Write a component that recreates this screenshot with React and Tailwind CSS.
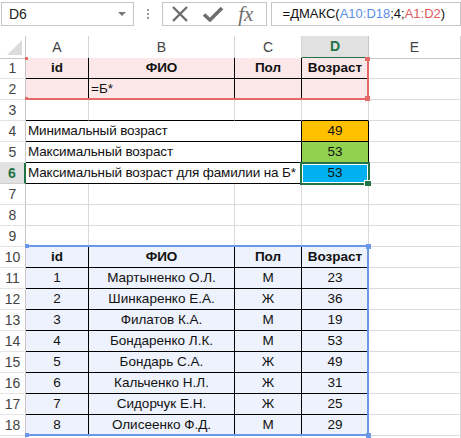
const people = [
    [1, "Мартыненко О.Л.", "М", 23],
    [2, "Шинкаренко Е.А.", "Ж", 36],
    [3, "Филатов К.А.", "М", 19],
    [4, "Бондаренко Л.К.", "М", 53],
    [5, "Бондарь С.А.", "Ж", 49],
    [6, "Кальченко Н.Л.", "Ж", 31],
    [7, "Сидорчук Е.Н.", "Ж", 25],
    [8, "Олисеенко Ф.Д.", "М", 29],
]

function Cell({ children, span, right = "gray", bottom = "gray", bg = "", align = "center", bold }) {
    const r = right === "black" ? "border-r-black" : "border-r-[#dadada]"
    const b = bottom === "black" ? "border-b-black" : "border-b-[#dadada]"
    return (
        <div
            className={`flex items-center h-[21px] border-r border-b ${r} ${b} ${bg} ${span ? "col-span-3 tracking-[-0.15px]" : ""} ${align === "left" ? "justify-start pl-[2px]" : "justify-center"} ${bold ? "font-bold" : ""} whitespace-nowrap overflow-visible text-[13.5px] text-[#111]`}
        >
            {children}
        </div>
    )
}

function RowHead({ n, active }) {
    if (active) return (
        <div className="flex items-center justify-center h-[21px] bg-[#e1e1e1] border-r-2 border-r-[#217346] border-b border-b-[#d0d0d0] text-[14px] font-bold text-[#217346]">
            {n}
        </div>
    )
    return (
        <div className="flex items-center justify-center h-[21px] bg-white border-r border-r-[#c6c6c6] border-b border-b-[#e4e4e4] text-[14px] text-[#444]">
            {n}
        </div>
    )
}

function Toolbar() {
    return (
        <div className="flex items-start h-[36px] pt-[2px] bg-white">
            <div className="ml-[1px] w-[139px] h-[24px] border border-[#c6c6c6] flex items-center justify-between pl-[7px] pr-[7px] text-[14px] text-[#222]">
                <span>D6</span>
                <span className="w-0 h-0 border-l-[4px] border-r-[4px] border-t-[4px] border-l-transparent border-r-transparent border-t-[#777]" />
            </div>
            <div className="w-[30px] h-[24px] flex flex-col items-center justify-center gap-[2px]">
                <span className="w-[2px] h-[2px] bg-[#999]" />
                <span className="w-[2px] h-[2px] bg-[#999]" />
                <span className="w-[2px] h-[2px] bg-[#999]" />
            </div>
            <div className="w-[110px] h-[24px] border border-[#c6c6c6] flex items-center">
                <svg width="20" height="18" viewBox="0 0 20 18" className="ml-[7px]">
                    <path d="M3 2 L17 16 M17 2 L3 16" stroke="#6e6e6e" strokeWidth="2.4" fill="none" />
                </svg>
                <svg width="22" height="18" viewBox="0 0 22 18" className="ml-[12px]">
                    <path d="M2 9.5 L8 15 L20 3" stroke="#6e6e6e" strokeWidth="3.6" fill="none" strokeLinejoin="round" />
                </svg>
                <span className="ml-[14px] text-[21px] italic text-[#6e6e6e] leading-none" style={{ fontFamily: '"Liberation Serif", "DejaVu Serif", serif' }}>
                    fx
                </span>
            </div>
            <div className="ml-[4px] w-[200px] h-[24px] border border-[#c6c6c6] flex items-center pl-[11px] text-[13px] text-[#111] whitespace-nowrap">
                <span>=ДМАКС(</span>
                <span className="text-[#5b8ee6]">A10:D18</span>
                <span>;4;</span>
                <span className="text-[#e05a5a]">A1:D2</span>
                <span>)</span>
            </div>
        </div>
    )
}

function ColHeaders() {
    return (
        <div className="grid grid-cols-[26px_63px_146px_67px_67px_92px] h-[22px]">
            <div className="relative border-r border-r-[#c6c6c6] border-b border-b-[#c6c6c6]">
                <svg width="16" height="15" viewBox="0 0 16 15" className="absolute left-[7px] top-[4px]">
                    <path d="M15 0 L15 15 L0 15 Z" fill="#dcdcdc" />
                </svg>
            </div>
            {["A", "B", "C", "D", "E"].map(c => c === "D" ? (
                <div key={c} className="flex items-center justify-center bg-[#e1e1e1] border-r border-r-[#c6c6c6] border-b-2 border-b-[#217346] text-[14px] font-bold text-[#217346]">
                    {c}
                </div>
            ) : (
                <div key={c} className="flex items-center justify-center border-r border-r-[#d4d4d4] border-b border-b-[#c6c6c6] text-[14px] text-[#444]">
                    {c}
                </div>
            ))}
        </div>
    )
}

export default function App() {
    const pink = "bg-[#fce8e8]"
    const blue = "bg-[#edf2fc]"

    const rows = []

    // row 1
    rows.push(
        <RowHead key="h1" n={1} />,
        <Cell key="a1" bg={pink} right="black" bottom="black" bold>id</Cell>,
        <Cell key="b1" bg={pink} right="black" bottom="black" bold>ФИО</Cell>,
        <Cell key="c1" bg={pink} right="black" bottom="black" bold>Пол</Cell>,
        <Cell key="d1" bg={pink} right="black" bottom="black" bold>Возраст</Cell>,
        <Cell key="e1" />
    )
    // row 2
    rows.push(
        <RowHead key="h2" n={2} />,
        <Cell key="a2" bg={pink} right="black" />,
        <Cell key="b2" bg={pink} right="black" align="left">=Б*</Cell>,
        <Cell key="c2" bg={pink} right="black" />,
        <Cell key="d2" bg={pink} right="black" />,
        <Cell key="e2" />
    )
    // row 3
    rows.push(
        <RowHead key="h3" n={3} />,
        <Cell key="a3" bottom="black" />,
        <Cell key="b3" bottom="black" />,
        <Cell key="c3" bottom="black" />,
        <Cell key="d3" bottom="black" />,
        <Cell key="e3" />
    )
    const stats = [
        [4, "Минимальный возраст", "49", "bg-[#ffc000]"],
        [5, "Максимальный возраст", "53", "bg-[#92d050]"],
        [6, "Максимальный возраст для фамилии на Б*", "53", "bg-[#00b0f0]"],
    ]
    stats.forEach(([n, label, val, color]) => {
        rows.push(
            <RowHead key={"h" + n} n={n} active={n === 6} />,
            <Cell key={"a" + n} span right="black" bottom="black" align="left">{label}</Cell>,
            <Cell key={"d" + n} bg={color} right="black" bottom="black">{val}</Cell>,
            <Cell key={"e" + n} />
        )
    })
    ;[7, 8, 9].forEach(n => {
        rows.push(
            <RowHead key={"h" + n} n={n} />,
            <Cell key={"a" + n} />,
            <Cell key={"b" + n} />,
            <Cell key={"c" + n} />,
            <Cell key={"d" + n} />,
            <Cell key={"e" + n} />
        )
    })
    // row 10 header
    rows.push(
        <RowHead key="h10" n={10} />,
        <Cell key="a10" bg={blue} right="black" bottom="black" bold>id</Cell>,
        <Cell key="b10" bg={blue} right="black" bottom="black" bold>ФИО</Cell>,
        <Cell key="c10" bg={blue} right="black" bottom="black" bold>Пол</Cell>,
        <Cell key="d10" bg={blue} right="black" bottom="black" bold>Возраст</Cell>,
        <Cell key="e10" />
    )
    people.forEach(([id, name, sex, age], i) => {
        const n = 11 + i
        rows.push(
            <RowHead key={"h" + n} n={n} />,
            <Cell key={"a" + n} bg={blue} right="black" bottom="black">{id}</Cell>,
            <Cell key={"b" + n} bg={blue} right="black" bottom="black">{name}</Cell>,
            <Cell key={"c" + n} bg={blue} right="black" bottom="black">{sex}</Cell>,
            <Cell key={"d" + n} bg={blue} right="black" bottom="black">{age}</Cell>,
            <Cell key={"e" + n} />
        )
    })
    // row 19 peeks in under the window edge, gridlines only
    rows.push(
        <div key="h19" className="h-[21px] border-r border-r-[#c6c6c6]" />,
        <Cell key="a19" />,
        <Cell key="b19" />,
        <Cell key="c19" />,
        <Cell key="d19" />,
        <Cell key="e19" />
    )

    return (
        <div className="relative w-[461px] h-[438px] overflow-hidden bg-white" style={{ fontFamily: '"Liberation Sans", Arial, sans-serif' }}>
            <Toolbar />
            <ColHeaders />
            <div className="grid grid-cols-[26px_63px_146px_67px_67px_92px]">
                {rows}
            </div>

            {/* red reference range A1:D2 */}
            <div className="absolute left-[25px] top-[57px] w-[344px] h-[43px] border-r-2 border-b-2 border-[#e46a6a] pointer-events-none" />
            <div className="absolute left-[365px] top-[57px] w-[5px] h-[4px] bg-[#e46a6a]" />
            <div className="absolute left-[365px] top-[96px] w-[5px] h-[5px] bg-[#e46a6a]" />
            <div className="absolute left-[25px] top-[57px] w-[3px] h-[3px] bg-[#e46a6a]" />
            <div className="absolute left-[25px] top-[97px] w-[3px] h-[3px] bg-[#e46a6a]" />

            {/* blue reference range A10:D18 */}
            <div className="absolute left-[25px] top-[245px] w-[344px] h-[191px] border-t-2 border-r-2 border-b-2 border-[#6c97e8] pointer-events-none" />
            <div className="absolute left-[25px] top-[244px] w-[4px] h-[4px] bg-[#6c97e8]" />
            <div className="absolute left-[366px] top-[244px] w-[5px] h-[5px] bg-[#6c97e8]" />
            <div className="absolute left-[366px] top-[433px] w-[5px] h-[5px] bg-[#6c97e8]" />
            <div className="absolute left-[25px] top-[433px] w-[4px] h-[4px] bg-[#6c97e8]" />

            {/* active cell D6 */}
            <div className="absolute left-[300px] top-[162px] w-[70px] h-[23px] border-2 border-[#217346] shadow-[inset_0_0_0_1px_white] pointer-events-none" />
            <div className="absolute left-[364px] top-[180px] w-[7px] h-[6px] bg-[#217346] border-l border-t border-white" />
        </div>
    )
}
